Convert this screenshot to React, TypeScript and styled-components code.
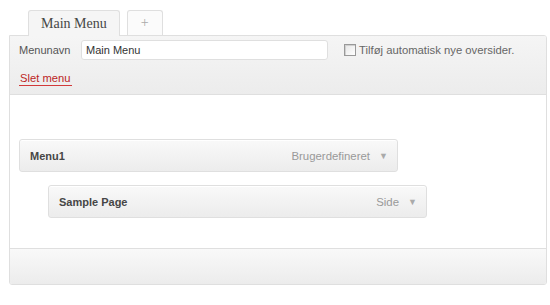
import styled, { createGlobalStyle } from "styled-components";

const GlobalStyle = createGlobalStyle`
  body {
    margin: 0;
    background: #fff;
    font-family: "Liberation Sans", Arial, sans-serif;
  }
`;

const Page = styled.div`
  width: 538px;
  padding: 10px 0 0 9px;
`;

const Tabs = styled.div`
  display: flex;
  align-items: flex-end;
  gap: 7px;
  padding-left: 19px;
  height: 25px;
`;

const Tab = styled.div<{ $active?: boolean }>`
  box-sizing: border-box;
  height: ${(p) => (p.$active ? "26px" : "25px")};
  margin-bottom: ${(p) => (p.$active ? "-1px" : "0")};
  padding: 0 ${(p) => (p.$active ? "12px" : "13px")};
  display: flex;
  align-items: center;
  justify-content: center;
  border: 1px solid #dfdfdf;
  border-bottom: none;
  border-radius: 3px 3px 0 0;
  background: ${(p) => (p.$active ? "#f5f5f5" : "#fbfbfb")};
  color: ${(p) => (p.$active ? "#464646" : "#aaa")};
  font-family: "Liberation Serif", Georgia, serif;
  font-size: 14px;
  position: relative;
  z-index: 1;
`;

const Panel = styled.div`
  border: 1px solid #dfdfdf;
  border-radius: 0 3px 3px 3px;
  overflow: hidden;
`;

const Header = styled.div`
  box-sizing: border-box;
  height: 59px;
  padding: 4px 9px 0;
  background: linear-gradient(to bottom, #f5f5f5, #ececec);
  border-bottom: 1px solid #dfdfdf;
`;

const NameRow = styled.div`
  display: flex;
  align-items: center;
  height: 20px;
`;

const Label = styled.label`
  font-size: 11px;
  color: #555;
  width: 62px;
`;

const NameInput = styled.input`
  box-sizing: border-box;
  width: 247px;
  height: 20px;
  border: 1px solid #dfdfdf;
  border-radius: 3px;
  background: #fff;
  padding: 0 4px;
  font-family: "Liberation Sans", Arial, sans-serif;
  font-size: 11px;
  color: #333;
  outline: none;
`;

const AutoAdd = styled.label`
  display: flex;
  align-items: center;
  margin-left: 16px;
  gap: 3px;
  font-size: 11.3px;
  color: #666;
`;

const Box = styled.span`
  box-sizing: border-box;
  width: 12px;
  height: 12px;
  border: 1px solid #999;
  background: linear-gradient(135deg, #e6e6e6, #fff);
  box-shadow: inset 1px 1px 0 #d0d0d0;
`;

const DeleteLink = styled.a`
  display: inline-block;
  margin-top: 12px;
  padding: 0 2px 1px 1px;
  font-size: 11.2px;
  color: #bc1f1f;
  text-decoration: none;
  border-bottom: 1px solid #d23a3a;
`;

const Body = styled.div`
  background: #fff;
  padding: 44px 0 30px 9px;
  display: flex;
  flex-direction: column;
  gap: 13px;
`;

const Item = styled.div<{ $depth: number }>`
  box-sizing: border-box;
  width: 379px;
  height: 33px;
  margin-left: ${(p) => p.$depth * 29}px;
  display: flex;
  align-items: center;
  padding: 0 10px;
  border: 1px solid #dfdfdf;
  border-radius: 3px;
  background: linear-gradient(to bottom, #f9f9f9, #ececec);
  box-shadow: inset 0 1px 0 #fff;
`;

const ItemTitle = styled.span`
  flex: 1;
  font-size: 11px;
  font-weight: bold;
  color: #464646;
`;

const ItemType = styled.span`
  font-size: 11.4px;
  color: #999;
`;

const Arrow = styled.span`
  margin-left: 9px;
  font-size: 9px;
  color: #aaa;
  width: 8px;
`;

const Footer = styled.div`
  height: 35px;
  border-top: 1px solid #dfdfdf;
  background: linear-gradient(to bottom, #f9f9f9, #ececec);
`;

const items = [
  { title: "Menu1", type: "Brugerdefineret", depth: 0 },
  { title: "Sample Page", type: "Side", depth: 1 },
];

export default function App() {
  return (
    <>
      <GlobalStyle />
      <Page>
        <Tabs>
          <Tab $active>Main Menu</Tab>
          <Tab>+</Tab>
        </Tabs>
        <Panel>
          <Header>
            <NameRow>
              <Label>Menunavn</Label>
              <NameInput defaultValue="Main Menu" />
              <AutoAdd>
                <Box />
                Tilføj automatisk nye oversider.
              </AutoAdd>
            </NameRow>
            <DeleteLink href="#">Slet menu</DeleteLink>
          </Header>
          <Body>
            {items.map((it) => (
              <Item key={it.title} $depth={it.depth}>
                <ItemTitle>{it.title}</ItemTitle>
                <ItemType>{it.type}</ItemType>
                <Arrow>▼</Arrow>
              </Item>
            ))}
          </Body>
          <Footer />
        </Panel>
      </Page>
    </>
  );
}
